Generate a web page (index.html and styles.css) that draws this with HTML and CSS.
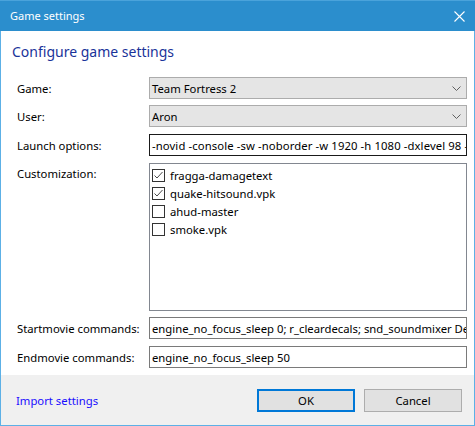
FILE: index.html
```html
<!DOCTYPE html>
<html>
<head>
<meta charset="utf-8">
<link rel="stylesheet" href="styles.css">
</head>
<body>
<div class="window">
  <div class="titlebar">
    <span class="title">Game settings</span>
    <svg class="close" width="11" height="11" viewBox="0 0 11 11"><path d="M0.5 0.5 L10.5 10.5 M10.5 0.5 L0.5 10.5" stroke="#fff" stroke-width="1.1" fill="none"/></svg>
  </div>
  <div class="content">
    <h1 class="heading">Configure game settings</h1>
    <div class="form">
      <div class="row r-game">
        <label class="label">Game:</label>
        <div class="combo"><span class="value">Team Fortress 2</span>
          <svg class="chev" width="9" height="5" viewBox="0 0 9 5"><polyline points="0.5,0.5 4.5,4.5 8.5,0.5" fill="none" stroke="#606060" stroke-width="1"/></svg>
        </div>
      </div>
      <div class="row r-user">
        <label class="label">User:</label>
        <div class="combo"><span class="value">Aron</span>
          <svg class="chev" width="9" height="5" viewBox="0 0 9 5"><polyline points="0.5,0.5 4.5,4.5 8.5,0.5" fill="none" stroke="#606060" stroke-width="1"/></svg>
        </div>
      </div>
      <div class="row r-launch">
        <label class="label">Launch options:</label>
        <div class="textbox focused"><span class="value value-wide">-novid -console -sw -noborder -w 1920 -h 1080 -dxlevel 98 -full</span></div>
      </div>
      <div class="row r-custom">
        <label class="label label-top">Customization:</label>
        <div class="checklist">
          <div class="item"><span class="check"><svg width="11" height="11" viewBox="0 0 11 11"><polyline points="1.5,5.5 4,8 9.5,2" fill="none" stroke="#4a4a4a" stroke-width="1"/></svg></span><span>fragga-damagetext</span></div>
          <div class="item"><span class="check"><svg width="11" height="11" viewBox="0 0 11 11"><polyline points="1.5,5.5 4,8 9.5,2" fill="none" stroke="#4a4a4a" stroke-width="1"/></svg></span><span>quake-hitsound.vpk</span></div>
          <div class="item"><span class="check"></span><span>ahud-master</span></div>
          <div class="item"><span class="check"></span><span>smoke.vpk</span></div>
        </div>
      </div>
      <div class="row r-start">
        <label class="label">Startmovie commands:</label>
        <div class="textbox"><span class="value">engine_no_focus_sleep 0; r_cleardecals; snd_soundmixer Default_Mix</span></div>
      </div>
      <div class="row r-end">
        <label class="label">Endmovie commands:</label>
        <div class="textbox"><span class="value">engine_no_focus_sleep 50</span></div>
      </div>
    </div>
  </div>
  <div class="footer">
    <a class="link">Import settings</a>
    <div class="buttons">
      <button class="btn btn-default">OK</button>
      <button class="btn">Cancel</button>
    </div>
  </div>
</div>
</body>
</html>
```

FILE: styles.css
```css
html, body {
  margin: 0;
  padding: 0;
  background: #ffffff;
}
.window {
  width: 475px;
  height: 426px;
  box-sizing: border-box;
  border: 1px solid #5cb0e6;
  border-top: none;
  display: flex;
  flex-direction: column;
  font-family: "Noto Sans", "Open Sans", sans-serif;
  font-size: 11.3px;
  color: #000;
  background: #fff;
}
.titlebar {
  height: 31px;
  margin: 0 -1px;
  background: #2b8ecd;
  border-top: 1px solid #4aa3db;
  box-sizing: border-box;
  display: flex;
  align-items: center;
  justify-content: space-between;
  padding: 0 10px 0 10px;
  color: #fff;
}
.title {
  font-size: 11px;
  line-height: 30px;
}
.close {
  display: block;
}
.content {
  flex: 1;
  display: flex;
  flex-direction: column;
}
.heading {
  margin: 11px 0 0 11px;
  font-size: 14px;
  font-weight: normal;
  line-height: 20px;
  color: #1a3399;
}
.form {
  display: flex;
  flex-direction: column;
  margin-top: 15px;
  padding-left: 16px;
}
.row {
  display: flex;
  align-items: center;
}
.r-user { margin-top: 6px; }
.r-launch { margin-top: 7px; }
.r-custom { margin-top: 7px; align-items: flex-start; }
.r-start { margin-top: 6px; }
.r-end { margin-top: 7px; }
.label {
  width: 132px;
  flex: none;
  white-space: nowrap;
}
.label-top {
  padding-top: 3px;
}
.combo, .textbox {
  width: 318px;
  height: 22px;
  box-sizing: border-box;
  display: flex;
  align-items: center;
  padding-left: 2px;
  overflow: hidden;
  white-space: nowrap;
}
.combo {
  background: #e5e5e5;
  border: 1px solid #acacac;
  justify-content: space-between;
  padding-right: 5px;
}
.textbox {
  background: #fff;
  border: 1px solid #7a7a7a;
}
.textbox.focused {
  border-color: #1a1a1a;
}
.value {
  white-space: nowrap;
}
.value-wide {
  letter-spacing: 0.1px;
}
.chev {
  display: block;
  flex: none;
}
.checklist {
  width: 318px;
  height: 148px;
  box-sizing: border-box;
  border: 1px solid #828790;
  padding: 2px 0 0 2px;
}
.item {
  display: flex;
  align-items: center;
  height: 18px;
}
.check {
  width: 13px;
  height: 13px;
  box-sizing: border-box;
  border: 1px solid #333333;
  background: #fff;
  margin-right: 5px;
  display: flex;
  align-items: center;
  justify-content: center;
  flex: none;
}
.check svg {
  display: block;
}
.footer {
  height: 50px;
  flex: none;
  background: #f0f0f0;
  display: flex;
  align-items: center;
  justify-content: space-between;
  padding: 0 12px 0 15px;
}
.link {
  color: #1a0dff;
  cursor: pointer;
}
.buttons {
  display: flex;
  gap: 9px;
}
.btn {
  width: 98px;
  height: 23px;
  box-sizing: border-box;
  background: #e1e1e1;
  border: 1px solid #adadad;
  font-family: "Noto Sans", "Open Sans", sans-serif;
  font-size: 11.3px;
  color: #000;
  padding: 0;
}
.btn-default {
  border: 2px solid #0078d7;
}
```
